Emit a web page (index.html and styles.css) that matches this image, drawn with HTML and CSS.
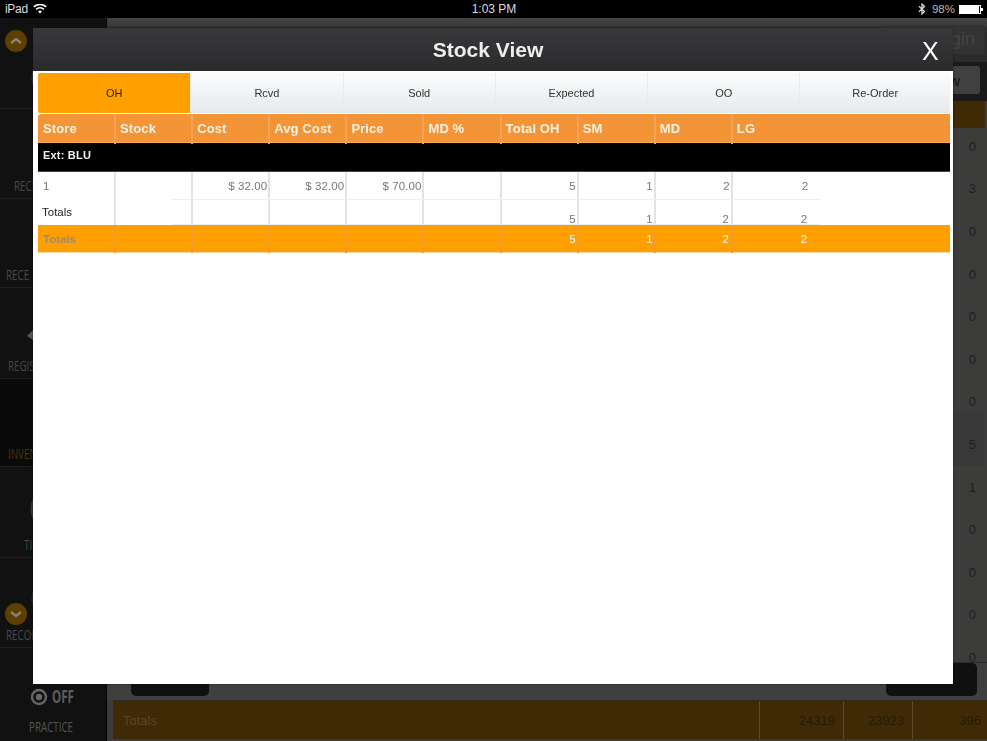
FILE: index.html
```html
<!DOCTYPE html>
<html lang="en">
<head>
<meta charset="utf-8">
<title>Stock View</title>
<link rel="stylesheet" href="styles.css">
</head>
<body>
<div class="status">
  <div class="status-left">
    <span class="device">iPad</span>
    <svg class="wifi" width="14" height="10" viewBox="0 0 14 10"><path d="M7 9.6 5 7.3a3 3 0 0 1 4 0zM3.7 6 2.6 4.8a6.6 6.6 0 0 1 8.8 0L10.300 6a5 5 0 0 0-6.600 0zM1.400 3.500.3 2.300a10 10 0 0 1 13.400 0l-1.100 1.200a8.400 8.400 0 0 0-11.200 0z" fill="#fff"/></svg>
  </div>
  <div class="status-time">1:03 PM</div>
  <div class="status-right">
    <svg class="bt" width="8" height="12" viewBox="0 0 8 12"><path d="M1 3.200 6.500 8.500 4 11V1l2.500 2.500L1 8.800" fill="none" stroke="#ddd" stroke-width="1.200"/></svg>
    <span>98%</span>
    <span class="battery"><span class="battery-fill"></span></span>
  </div>
</div>

<div class="app">
  <nav class="sidebar">
    <div class="nav-item">
      <span class="chevron chevron-top"><svg width="22" height="22" viewBox="0 0 22 22"><path d="M6 13l5-4 5 4" fill="none" stroke="#8a8272" stroke-width="2.400"/></svg></span>
      <svg class="nav-icon" viewBox="0 0 106 60"><circle cx="54" cy="38" r="21" fill="none" stroke="#333" stroke-width="3"/></svg>
    </div>
    <div class="nav-item"><svg class="nav-icon" viewBox="0 0 106 60"></svg><span class="nav-label inset-a">RECI</span></div>
    <div class="nav-item"><svg class="nav-icon" viewBox="0 0 106 60"></svg><span class="nav-label inset-b">RECE</span></div>
    <div class="nav-item"><svg class="nav-icon" viewBox="0 0 106 60"><path d="M27 40l6-6v10z" fill="#555"/></svg><span class="nav-label inset-c">REGIS</span></div>
    <div class="nav-item nav-item-active"><svg class="nav-icon" viewBox="0 0 106 60"></svg><span class="nav-label inset-c nav-label-active">INVEN</span></div>
    <div class="nav-item"><svg class="nav-icon" viewBox="0 0 106 60"><circle cx="53" cy="34" r="21" fill="none" stroke="#3a3a3a" stroke-width="3"/></svg><span class="nav-label inset-d">TI</span></div>
    <div class="nav-item">
      <span class="chevron chevron-bottom"><svg width="22" height="22" viewBox="0 0 22 22"><path d="M6 9l5 4 5-4" fill="none" stroke="#8a8272" stroke-width="2.400"/></svg></span>
      <svg class="nav-icon" viewBox="0 0 106 60"><circle cx="54" cy="34" r="21" fill="none" stroke="#2c2c2c" stroke-width="3"/></svg><span class="nav-label inset-b">RECON</span>
    </div>
    <div class="nav-item nav-item-last">
      <div class="practice-toggle">
        <svg width="18" height="18" viewBox="0 0 18 18"><circle cx="9" cy="9" r="7" fill="none" stroke="#666" stroke-width="2.400"/><circle cx="9" cy="9" r="3.200" fill="#666"/></svg>
        <span class="off">OFF</span>
      </div>
      <span class="practice-label">PRACTICE</span>
    </div>
  </nav>

  <main class="main">
    <div class="topbar">
      <div class="topbar-row"><span class="btn btn-login">Login</span></div>
      <div class="topbar-row"><span class="btn btn-view">View</span></div>
    </div>
    <div class="list">
      <div class="list-head"></div>
      <div class="list-row">0</div>
      <div class="list-row">3</div>
      <div class="list-row">0</div>
      <div class="list-row">0</div>
      <div class="list-row">0</div>
      <div class="list-row">0</div>
      <div class="list-row">0</div>
      <div class="list-row list-row-hl">5</div>
      <div class="list-row">1</div>
      <div class="list-row">0</div>
      <div class="list-row">0</div>
      <div class="list-row">0</div>
      <div class="list-row">0</div>
    </div>
    <div class="actions">
      <span class="action action-left"></span>
      <span class="action action-right"></span>
    </div>
    <div class="totals">
      <span class="totals-label">Totals</span>
      <span class="totals-num tn-1">24319</span>
      <span class="totals-num tn-2">23923</span>
      <span class="totals-num tn-3">396</span>
    </div>
  </main>
</div>

<section class="modal">
  <header class="modal-head">
    <h1>Stock View</h1>
    <span class="close">X</span>
  </header>
  <div class="modal-body">
    <div class="tabs">
      <div class="tab tab-active">OH</div>
      <div class="tab">Rcvd</div>
      <div class="tab">Sold</div>
      <div class="tab">Expected</div>
      <div class="tab">OO</div>
      <div class="tab">Re-Order</div>
    </div>
    <div class="grid grid-head">
      <div>Store</div><div>Stock</div><div>Cost</div><div>Avg Cost</div><div>Price</div><div>MD %</div><div>Total OH</div><div>SM</div><div>MD</div><div>LG</div>
    </div>
    <div class="ext">Ext: BLU</div>
    <div class="grid grid-data">
      <div class="lead">1</div><div></div><div>$ 32.00</div><div>$ 32.00</div><div>$ 70.00</div><div></div><div>5</div><div>1</div><div>2</div><div>2</div>
    </div>
    <div class="grid grid-sub">
      <div class="lead">Totals</div><div></div><div></div><div></div><div></div><div></div><div>5</div><div>1</div><div>2</div><div>2</div>
    </div>
    <div class="grid grid-total">
      <div class="lead">Totals</div><div></div><div></div><div></div><div></div><div></div><div>5</div><div>1</div><div>2</div><div>2</div>
    </div>
  </div>
</section>
</body>
</html>
```
FILE: styles.css
```css
* { box-sizing: border-box; }
html, body { margin: 0; padding: 0; }
body {
  width: 987px;
  height: 741px;
  overflow: hidden;
  position: relative;
  background: #000;
  font-family: "Liberation Sans", Arial, sans-serif;
}

/* status bar */
.status {
  height: 18px;
  background: #000;
  color: #ddd;
  font-size: 12px;
  display: grid;
  grid-template-columns: 1fr auto 1fr;
  align-items: center;
  padding: 0 5px;
}
.status-left { display: flex; align-items: center; gap: 5px; }
.device { letter-spacing: -.3px; }
.status-time { font-size: 12px; padding-left: 1px; }
.status-right { display: flex; align-items: center; justify-content: flex-end; gap: 4px; font-size: 11.500px; padding-right: 1px; color: #bbb; }
.bt { margin-right: 2px; }
.battery { width: 22px; height: 9px; border: 1px solid #fff; display: block; position: relative; }
.battery::after { content: ""; position: absolute; right: -3px; top: 2px; width: 2px; height: 3px; background: #fff; }
.battery-fill { display: block; width: 95%; height: 100%; background: #fff; }

/* background app */
.app { display: flex; height: 723px; }
.sidebar { width: 106px; flex: none; background: #111112; display: flex; flex-direction: column; }
.nav-item {
  height: 90px;
  flex: none;
  border-bottom: 1px solid #1e1e1f;
  display: flex;
  flex-direction: column;
  justify-content: flex-end;
  padding-bottom: 5px;
  position: relative;
  overflow: hidden;
}
.nav-item:nth-child(1), .nav-item:nth-child(4), .nav-item:nth-child(6) { height: 91px; }
.nav-item:nth-child(3) { height: 89px; }
.nav-item:nth-child(5) { height: 88px; }
.nav-item-active { background: #0a0a0a; }
.nav-item-last { flex: 1; border-bottom: 0; padding-bottom: 7px; }
.nav-icon { width: 106px; height: 60px; display: block; margin-bottom: 3px; flex: none; }
.chevron {
  position: absolute;
  left: 5px;
  width: 22px;
  height: 22px;
  border-radius: 50%;
  background: #5c3f02;
  display: block;
}
.chevron svg { display: block; }
.chevron-top { top: 12px; }
.chevron-bottom { top: 45px; }
.nav-label {
  font-family: "Open Sans", sans-serif;
  font-size: 14px;
  line-height: 14px;
  color: #474747;
  transform: scaleX(.7);
  transform-origin: left center;
  display: block;
}
.nav-label-active { color: #4f3208; }
.inset-a { margin-left: 14px; }
.inset-b { margin-left: 6px; }
.inset-c { margin-left: 8px; }
.inset-d { margin-left: 24px; }
.practice-toggle { display: flex; align-items: center; gap: 4px; height: 24px; margin-bottom: 11px; margin-left: 30px; }
.off {
  font-family: "Open Sans", sans-serif;
  font-weight: 700;
  font-size: 17px;
  line-height: 24px;
  color: #5d5d5d;
  transform: scaleX(.68);
  transform-origin: left center;
}
.practice-label {
  font-family: "Open Sans", sans-serif;
  font-size: 14px;
  line-height: 14px;
  color: #555;
  margin-left: 29px;
  transform: scaleX(.7);
  transform-origin: left center;
}

.main {
  flex: 1;
  min-width: 0;
  display: flex;
  flex-direction: column;
  background: #3c3c3b;
  border-left: 1px solid #050505;
}
.topbar { height: 83px; flex: none; background: #1a1a1b; display: flex; flex-direction: column; }
.topbar-row { display: flex; justify-content: flex-end; }
.topbar-row:first-child { height: 44px; background: linear-gradient(#444 0, #3a3a3a 8px, #2b2b2c 10px); padding: 7px 2px 0 0; }
.topbar-row:last-child { padding: 4px 7px 0 0; }
.btn { border-radius: 3px; display: flex; align-items: center; justify-content: flex-end; color: #444; }
.btn-login { width: 100px; height: 29px; background: #333; font-size: 18px; padding-right: 10px; }
.btn-view { width: 90px; height: 28px; background: #404040; color: #111; font-size: 15px; padding-right: 20px; }

.list { flex: 1; min-height: 0; overflow: hidden; padding-left: 7px; display: flex; flex-direction: column; }
.list-head { height: 27px; flex: none; background: #3f2a05; margin-right: 2px; margin-bottom: -3px; }
.list-row {
  height: 42.600px;
  flex: none;
  display: flex;
  align-items: center;
  justify-content: flex-end;
  padding-right: 11px;
  font-size: 13px;
  color: #1e1e1e;
}
.list-row-hl { height: 54px; margin-top: -11.400px; padding-top: 11px; background: #383838; margin-right: 3px; padding-right: 8px; }
.actions { height: 38px; flex: none; display: flex; justify-content: space-between; background: #3f3f3f; border-top: 1px solid #2a2a2a; padding-left: 24px; padding-right: 10px; }
.action { height: 33px; background: #101010; border-radius: 0 0 5px 5px; display: block; }
.action-left { width: 78px; }
.action-right { width: 91px; border-radius: 5px; }
.totals {
  height: 39px;
  flex: none;
  margin-left: 6px;
  margin-bottom: 2px;
  background: #3f2a05;
  border-top: 1px solid #2f2a20;
  display: grid;
  grid-template-columns: 646px 84px 69px 1fr;
  align-items: center;
  color: #221b0c;
  font-size: 13px;
}
.totals-label { padding-left: 10px; color: #57462a; }
.totals-num { height: 100%; display: flex; align-items: center; justify-content: flex-end; padding-right: 8px; border-left: 1px solid #5a4a2c; }
.tn-3 { padding-right: 6px; }

/* modal over the app */
.modal {
  position: absolute;
  left: 33px;
  top: 28px;
  width: 920px;
  height: 656px;
  background: #fff;
  box-shadow: 0 0 2px rgba(0, 0, 0, .5);
  will-change: transform;
}
.modal-head {
  height: 43px;
  background: linear-gradient(#38383a, #2b2a2c);
  position: relative;
  display: flex;
  align-items: center;
  justify-content: center;
  color: #eee;
  border-bottom: 1px solid #2a2a2a;
  padding-right: 10px;
}
.modal-head h1 { margin: 0; font-size: 21px; font-weight: 700; line-height: 43px; }
.close {
  position: absolute;
  left: 889px;
  top: 8px;
  font-size: 25px;
  line-height: 30px;
  color: #fff;
}
.modal-body { padding: 2px 3px 0 5px; }

.tabs { display: grid; grid-template-columns: repeat(5, 152.300px) 1fr; height: 40px; }
.tab {
  display: flex;
  align-items: center;
  justify-content: center;
  font-size: 11px;
  color: #333;
  background: linear-gradient(#fbfcfd, #e8e9ea);
  border-left: 1px solid #eaebec;
}
.tab-active { background: #ffa000; color: #2a1c00; border-left: 0; border-radius: 2px 0 0 2px; }

.grid { display: grid; grid-template-columns: repeat(9, 77.100px) 1fr; position: relative; }
.grid > div + div { border-left: 2px solid #e3e3e3; margin-left: -1px; }

.grid-head {
  margin-top: 1px;
  height: 29px;
  background: #f39436;
  color: #fdf1e2;
  font-size: 13px;
  font-weight: 700;
  letter-spacing: .1px;
  border-top-left-radius: 3px;
  line-height: 30px;
  border-bottom: 1px solid #f7a95c;
}
.grid-head > div { padding-left: 5px; }
.grid-head > div + div { border-left: 2px solid #f6a358; padding-left: 4px; }

.ext {
  height: 29px;
  background: #000;
  color: #f2f2f2;
  font-size: 11px;
  font-weight: 700;
  letter-spacing: .2px;
  padding: 6px 0 0 5px;
  line-height: 13px;
  border-bottom: 1px solid #444;
}

.grid-data { height: 28px; font-size: 11.500px; letter-spacing: .1px; color: #777; line-height: 28px; text-align: right; }
.grid-data > div { padding-right: 2px; }
.grid-data > div:last-child { text-align: left; padding-left: 69px; }
.grid-data > .lead { text-align: left; padding-left: 5px; }
.grid-data::after,
.grid-sub::after {
  content: "";
  position: absolute;
  left: 134px;
  width: 648px;
  bottom: 0;
  height: 1px;
  background: #eee;
}

.grid-sub { height: 25px; font-size: 11.500px; color: #777; text-align: right; }
.grid-sub > div { padding-right: 2px; padding-top: 13px; line-height: 13px; }
.grid-sub > div:nth-child(9) { padding-right: 3px; }
.grid-sub > div:last-child { text-align: left; padding-left: 68px; padding-right: 0; }
.grid-sub > .lead { text-align: left; padding: 6px 0 0 4px; color: #222; }

.grid-total {
  height: 28px;
  background: #ffa000;
  border-bottom: 1px solid #f5d9a8;
  font-size: 11.500px;
  color: #fff;
  line-height: 28px;
  text-align: right;
}
.grid-total > div { padding-right: 2px; }
.grid-total > div:nth-child(9) { padding-right: 3px; }
.grid-total > div + div { border-left-color: #f59a30; }
.grid-total > div:last-child { text-align: left; padding-left: 68px; padding-right: 0; }
.grid-total > .lead { text-align: left; padding-left: 5px; font-weight: 700; color: #a08a68; }
```
